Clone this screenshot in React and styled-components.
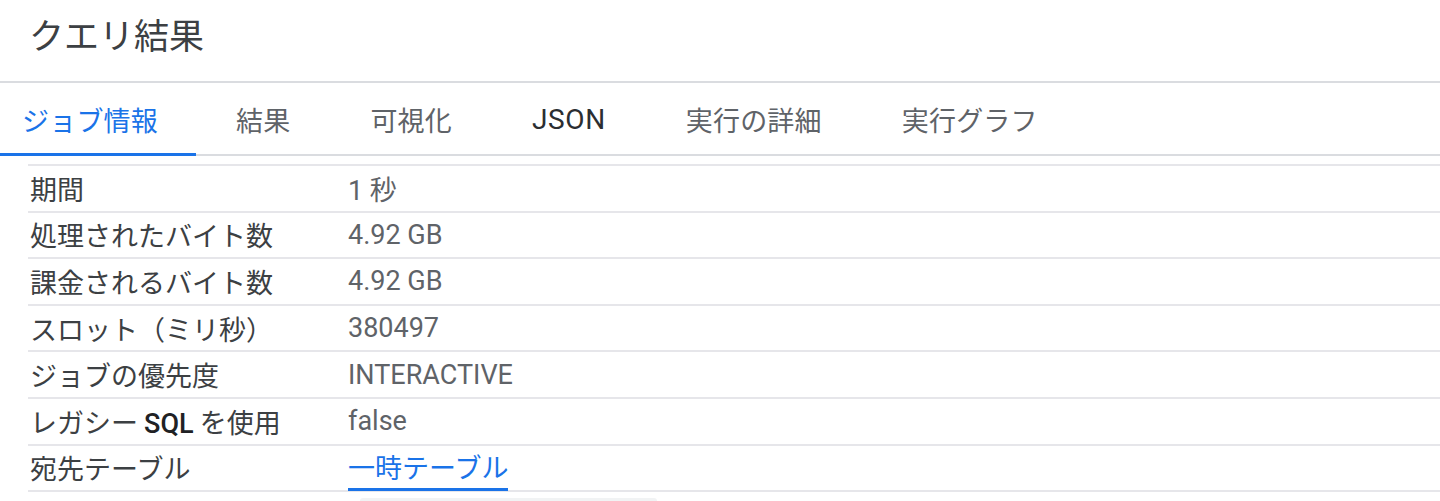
import React from "react";
import styled, { createGlobalStyle } from "styled-components";

const GlobalStyle = createGlobalStyle`
  body {
    margin: 0;
    background: #ffffff;
    font-family: Roboto, "Noto Sans CJK JP", sans-serif;
    overflow: hidden;
  }
`;

const Page = styled.div`
  width: 1440px;
  height: 501px;
  overflow: hidden;
`;

const Header = styled.div`
  height: 81px;
  display: flex;
  align-items: center;
  padding-left: 29px;
  box-sizing: border-box;
`;

const Title = styled.h1`
  margin: 0 0 14px;
  font-size: 35px;
  font-weight: 400;
  color: #3c4043;
  font-family: "Noto Sans CJK JP", sans-serif;
`;

const TabBar = styled.div`
  display: flex;
  height: 75px;
  border-top: 2px solid #dadce0;
  border-bottom: 2px solid #dadce0;
  box-sizing: border-box;
  margin-bottom: 8px;
`;

const Tab = styled.div`
  display: flex;
  align-items: center;
  padding: 3px 40px 0;
  margin-bottom: -2px;
  font-size: ${({ $latin }) => ($latin ? "28px" : "27px")};
  letter-spacing: ${({ $latin }) => ($latin ? "0.6px" : "0.2px")};
  font-family: ${({ $latin }) =>
    $latin ? "Roboto, sans-serif" : '"Noto Sans CJK JP", sans-serif'};
  font-weight: 400;
  color: ${({ $active, $latin }) =>
    $active ? "#1a73e8" : $latin ? "#2b2e31" : "#5f6368"};
  border-bottom: 3px solid ${({ $active }) => ($active ? "#1a73e8" : "transparent")};

  &:first-child {
    padding: 3px 38px 0 22px;
  }
`;

const Table = styled.div`
  margin-left: 28px;
  border-top: 2px solid #e6e6ea;
`;

const Row = styled.div`
  display: flex;
  align-items: center;
  height: 46.6px;
  box-sizing: border-box;
  border-bottom: 2px solid #e6e6ea;
  padding-left: 2px;
  font-size: 27px;
`;

const Label = styled.div`
  width: 318px;
  color: #3c4043;
  font-family: "Noto Sans CJK JP", sans-serif;
`;

const Latin = styled.span`
  font-family: Roboto, sans-serif;
  font-weight: 500;
  color: #202124;
`;

const Value = styled.div`
  color: #5f6368;
  font-family: Roboto, "Noto Sans CJK JP", sans-serif;
`;

const Link = styled.a`
  color: #1a73e8;
  text-decoration: none;
  border-bottom: 3px solid #1a73e8;
  padding-bottom: 2px;
  margin-top: 3px;
  font-family: "Noto Sans CJK JP", sans-serif;
`;

const ScrollHint = styled.div`
  margin: 6px 0 0 360px;
  width: 297px;
  height: 6px;
  border-radius: 3px;
  background: #f1f3f4;
`;

const tabs = [
  { name: "ジョブ情報", active: true },
  { name: "結果" },
  { name: "可視化" },
  { name: "JSON", latin: true },
  { name: "実行の詳細" },
  { name: "実行グラフ" },
];

const rows = [
  { label: "期間", value: "1 秒" },
  { label: "処理されたバイト数", value: "4.92 GB" },
  { label: "課金されるバイト数", value: "4.92 GB" },
  { label: "スロット（ミリ秒）", value: "380497" },
  { label: "ジョブの優先度", value: "INTERACTIVE" },
  {
    label: (
      <>
        レガシー <Latin>SQL</Latin> を使用
      </>
    ),
    value: "false",
  },
  { label: "宛先テーブル", link: "一時テーブル" },
];

export default function App() {
  return (
    <Page>
      <GlobalStyle />
      <Header>
        <Title>クエリ結果</Title>
      </Header>
      <TabBar>
        {tabs.map((t) => (
          <Tab key={t.name} $active={t.active} $latin={t.latin}>
            {t.name}
          </Tab>
        ))}
      </TabBar>
      <Table>
        {rows.map((r, i) => (
          <Row key={i}>
            <Label>{r.label}</Label>
            {r.link ? (
              <Link href="#">{r.link}</Link>
            ) : (
              <Value>{r.value}</Value>
            )}
          </Row>
        ))}
      </Table>
      <ScrollHint />
    </Page>
  );
}
